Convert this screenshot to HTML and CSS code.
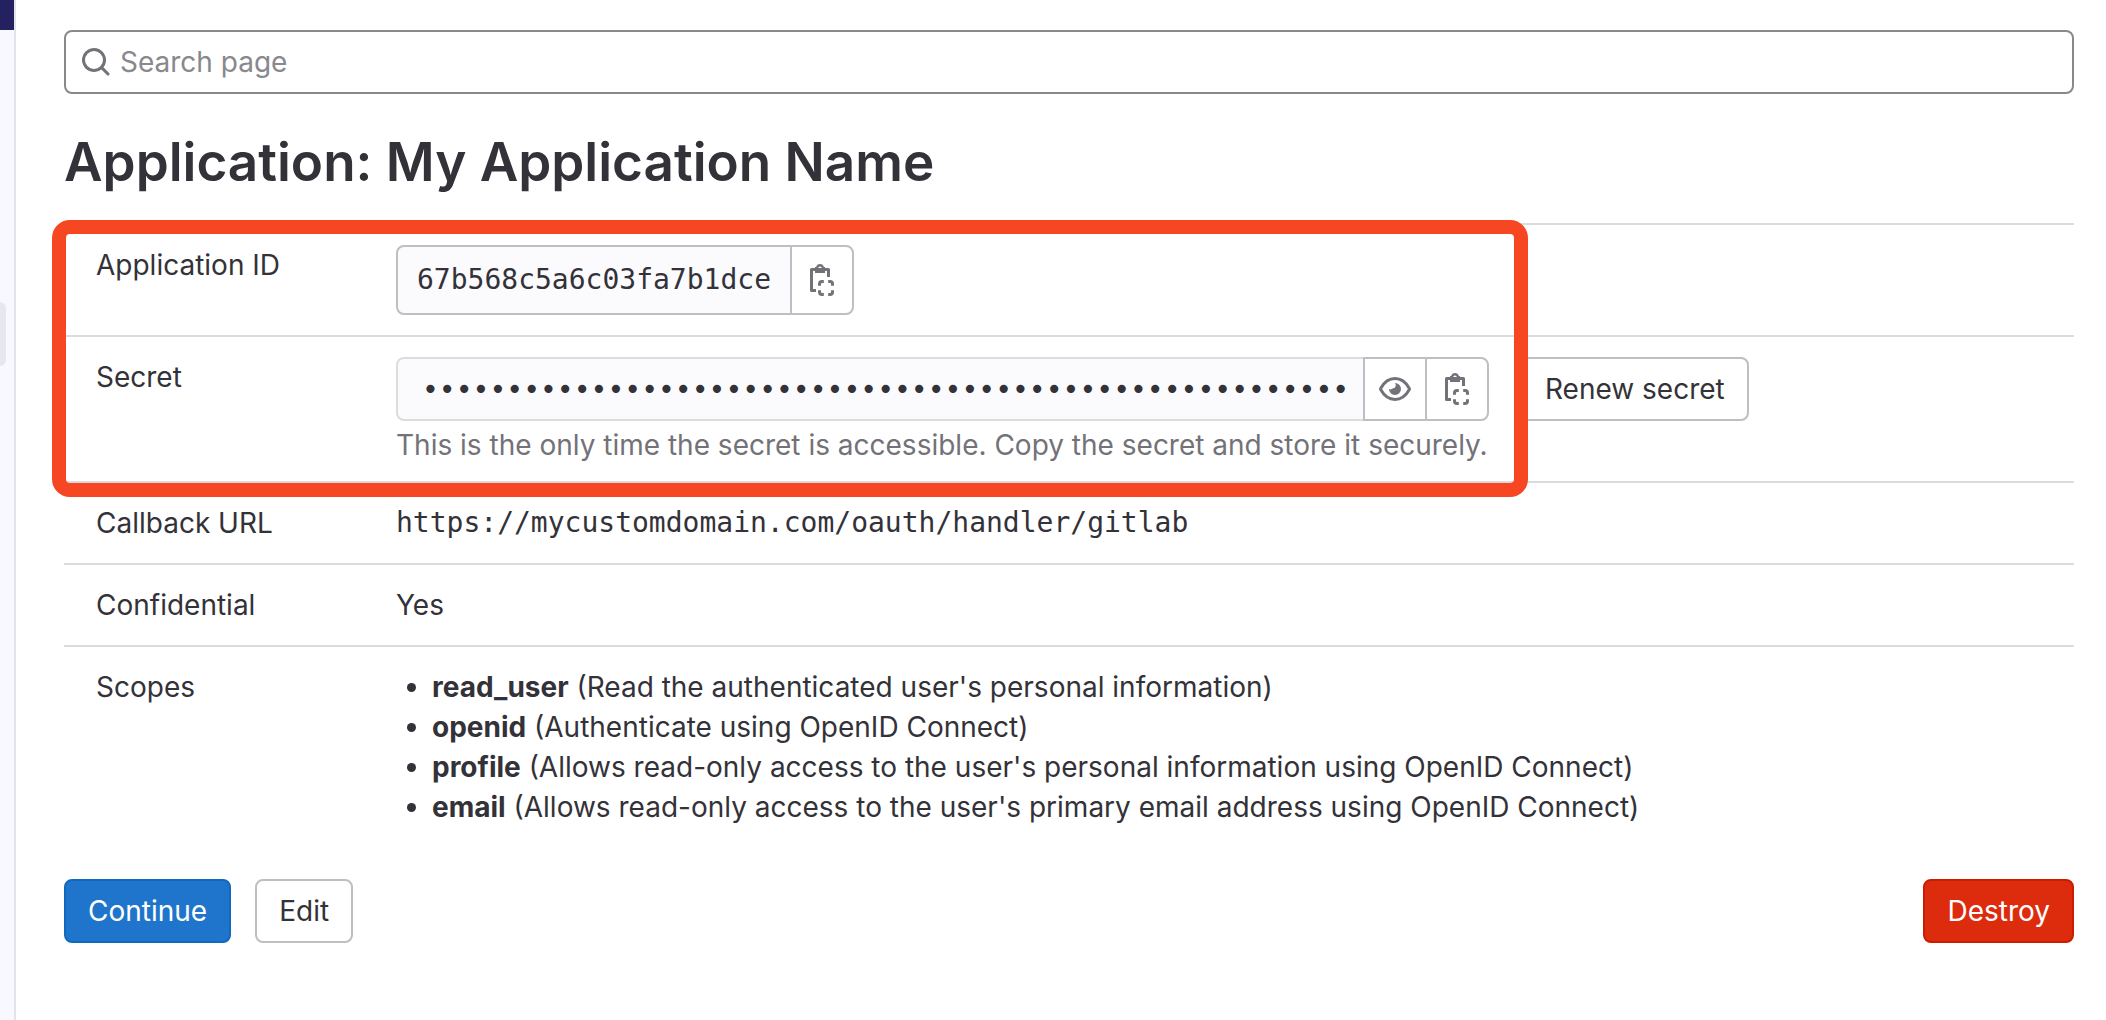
FILE: index.html
```html
<!DOCTYPE html>
<html lang="en">
<head>
<meta charset="utf-8">
<meta name="viewport" content="width=device-width, initial-scale=1">
<title>Application: My Application Name</title>
<link rel="stylesheet" href="styles.css">
</head>
<body>
<svg class="sprite" aria-hidden="true">
  <symbol id="icon-search" viewBox="0 0 16 16">
    <path fill-rule="evenodd" clip-rule="evenodd" d="M11.5 7a4.5 4.5 0 1 1-9 0 4.5 4.5 0 0 1 9 0m-.82 4.74a6 6 0 1 1 1.06-1.06l2.79 2.79a.75.75 0 1 1-1.06 1.06z"/>
  </symbol>
  <symbol id="icon-copy" viewBox="0 0 16 16">
    <path d="M5 13.250H2.750V2.750H11.250V6.500" fill="none" stroke="currentColor" stroke-width="1.500" stroke-linejoin="round"/>
    <path fill-rule="evenodd" clip-rule="evenodd" d="M7 0a2 2 0 0 0-1.940 1.500H4.500v3h5v-3H8.940A2 2 0 0 0 7 0m0 1.200a.9.9 0 1 1 0 1.800.9.9 0 0 1 0-1.800"/>
    <path d="M8.900 8.750H8A1.250 1.250 0 0 0 6.750 10v.9M11.100 8.750h.9A1.250 1.250 0 0 1 13.250 10v.9M13.250 13.100v.9A1.250 1.250 0 0 1 12 15.250h-.9M8.900 15.250H8A1.250 1.250 0 0 1 6.750 14v-.9" fill="none" stroke="currentColor" stroke-width="1.500"/>
  </symbol>
  <symbol id="icon-eye" viewBox="0 0 16 16">
    <path d="M.9 8.400a.8.8 0 0 1 0-.8C2.400 4.900 4.900 2.750 8 2.750s5.600 2.150 7.100 4.850a.8.8 0 0 1 0 .8C13.600 11.100 11.100 13.250 8 13.250S2.400 11.100.9 8.400z" fill="none" stroke="currentColor" stroke-width="1.500" stroke-linejoin="round"/>
    <path d="M8 5a1.700 1.700 0 0 1-1.200 2.800A1.700 1.700 0 0 1 5 8a3 3 0 1 0 3-3z"/>
  </symbol>
</svg>
<div class="layout">
  <aside class="sidebar">
    <div class="sidebar-brand"></div>
    <div class="sidebar-active"></div>
  </aside>
  <main class="content">
    <label class="search">
      <svg class="icon" aria-hidden="true"><use href="#icon-search"/></svg>
      <input class="search-input" type="search" placeholder="Search page" aria-label="Search page">
    </label>
    <h1 class="title">Application: My Application Name</h1>
    <div class="details">
      <table class="table">
        <tbody>
          <tr>
            <th scope="row">Application ID</th>
            <td>
              <div class="group group-id">
                <code class="group-text">67b568c5a6c03fa7b1dce</code>
                <button class="group-button" type="button" aria-label="Copy ID"><svg class="icon" aria-hidden="true"><use href="#icon-copy"/></svg></button>
              </div>
            </td>
          </tr>
          <tr>
            <th scope="row"><label for="secret">Secret</label></th>
            <td>
              <div class="secret-row">
                <div class="secret">
                  <div class="group">
                    <input class="group-input" id="secret" type="password" readonly value="0123456789012345678901234567890123456789012345678901234">
                    <button class="group-button" type="button" aria-label="Click to reveal"><svg class="icon" aria-hidden="true"><use href="#icon-eye"/></svg></button>
                    <button class="group-button" type="button" aria-label="Copy secret"><svg class="icon" aria-hidden="true"><use href="#icon-copy"/></svg></button>
                  </div>
                  <p class="help">This is the only time the secret is accessible. Copy the secret and store it securely.</p>
                </div>
                <button class="button" type="button">Renew secret</button>
              </div>
            </td>
          </tr>
          <tr>
            <th scope="row">Callback URL</th>
            <td><code class="url">https://mycustomdomain.com/oauth/handler/gitlab</code></td>
          </tr>
          <tr>
            <th scope="row">Confidential</th>
            <td>Yes</td>
          </tr>
          <tr>
            <th scope="row">Scopes</th>
            <td>
              <ul class="scopes">
                <li><strong>read_user</strong> (Read the authenticated user's personal information)</li>
                <li><strong>openid</strong> (Authenticate using OpenID Connect)</li>
                <li><strong>profile</strong> (Allows read-only access to the user's personal information using OpenID Connect)</li>
                <li><strong>email</strong> (Allows read-only access to the user's primary email address using OpenID Connect)</li>
              </ul>
            </td>
          </tr>
        </tbody>
      </table>
      <div class="highlight"></div>
    </div>
    <div class="actions">
      <button class="button button-confirm" type="button">Continue</button>
      <button class="button" type="button">Edit</button>
      <button class="button button-danger" type="button">Destroy</button>
    </div>
  </main>
</div>
</body>
</html>
```

FILE: styles.css
```css
* {
  box-sizing: border-box;
}

body {
  margin: 0;
  background: #fff;
  color: #333238;
  font: 28px/40px Inter, "Noto Sans", sans-serif;
}

button,
input {
  margin: 0;
  font: inherit;
  color: inherit;
}

.sprite {
  display: none;
}

.icon {
  flex: none;
  width: 32px;
  height: 32px;
  fill: currentColor;
  color: #737278;
}

.layout {
  display: flex;
  min-height: 100vh;
}

.sidebar {
  flex: none;
  width: 16px;
  border-right: 2px solid #e3e3ec;
  background: #f8f8ff;
}

.sidebar-brand {
  height: 30px;
  background: #232160;
}

.sidebar-active {
  width: 6px;
  height: 64px;
  margin-top: 272px;
  border-radius: 0 8px 8px 0;
  background: #e7e7ee;
}

.content {
  flex: 1;
  min-width: 0;
  padding: 30px 32px 32px 48px;
}

.search {
  display: flex;
  align-items: center;
  gap: 8px;
  height: 64px;
  padding: 0 14px;
  border: 2px solid #89888d;
  border-radius: 8px;
}

.search-input {
  flex: 1;
  min-width: 0;
  padding: 0;
  border: 0;
  outline: 0;
  background: none;
  appearance: none;
}

.search-input::placeholder {
  color: #89888d;
  opacity: 1;
}

.title {
  margin: 36px 0 29px;
  font-size: 53px;
  line-height: 64px;
  font-weight: 600;
}

.details {
  position: relative;
}

.table {
  width: 100%;
  border-spacing: 0;
}

.table th,
.table td {
  padding: 20px 0 20px 32px;
  border-top: 2px solid #dcdcde;
  text-align: left;
  vertical-align: top;
  font-weight: 400;
}

.table th {
  width: 300px;
}

.table code {
  font: 28px/40px "DejaVu Sans Mono", monospace;
}

.url {
  display: block;
}

.group {
  display: flex;
}

.group-id {
  width: max-content;
  height: 70px;
}

.table .group-text {
  padding: 13px 19px;
  border: 2px solid #bfbfc3;
  border-radius: 8px 0 0 8px;
  background: #fbfafd;
}

.group-input {
  flex: 1;
  min-width: 0;
  height: 64px;
  padding: 0 12px 0 24px;
  border: 2px solid #dcdcde;
  border-radius: 8px 0 0 8px;
  outline: 0;
  background: #fbfafd;
  font-family: "DejaVu Sans Mono", monospace;
}

.group-button {
  display: grid;
  place-items: center;
  width: 64px;
  margin-left: -2px;
  padding: 0;
  border: 2px solid #bfbfc3;
  background: #fff;
}

.group-button:last-child {
  border-radius: 0 8px 8px 0;
}

.secret-row {
  display: flex;
  align-items: flex-start;
  gap: 32px;
}

.secret {
  width: 1093px;
}

.help {
  margin: 8px 0 0;
  line-height: 32px;
  color: #737278;
  white-space: nowrap;
}

.button {
  height: 64px;
  padding: 0 22px;
  border: 2px solid #bfbfc3;
  border-radius: 8px;
  background: #fff;
  white-space: nowrap;
}

.scopes {
  margin: 0;
  padding-left: 36px;
}

.highlight {
  position: absolute;
  top: -3px;
  left: -12px;
  width: 1476px;
  height: 277px;
  border: 14px solid #f64722;
  border-radius: 18px;
  pointer-events: none;
}

.actions {
  display: flex;
  gap: 24px;
  margin-top: 32px;
}

.button-confirm {
  border-color: #1068bf;
  background: #1f75cb;
  color: #fff;
}

.button-danger {
  margin-left: auto;
  border-color: #c91c00;
  background: #dd2b0e;
  color: #fff;
}
```
